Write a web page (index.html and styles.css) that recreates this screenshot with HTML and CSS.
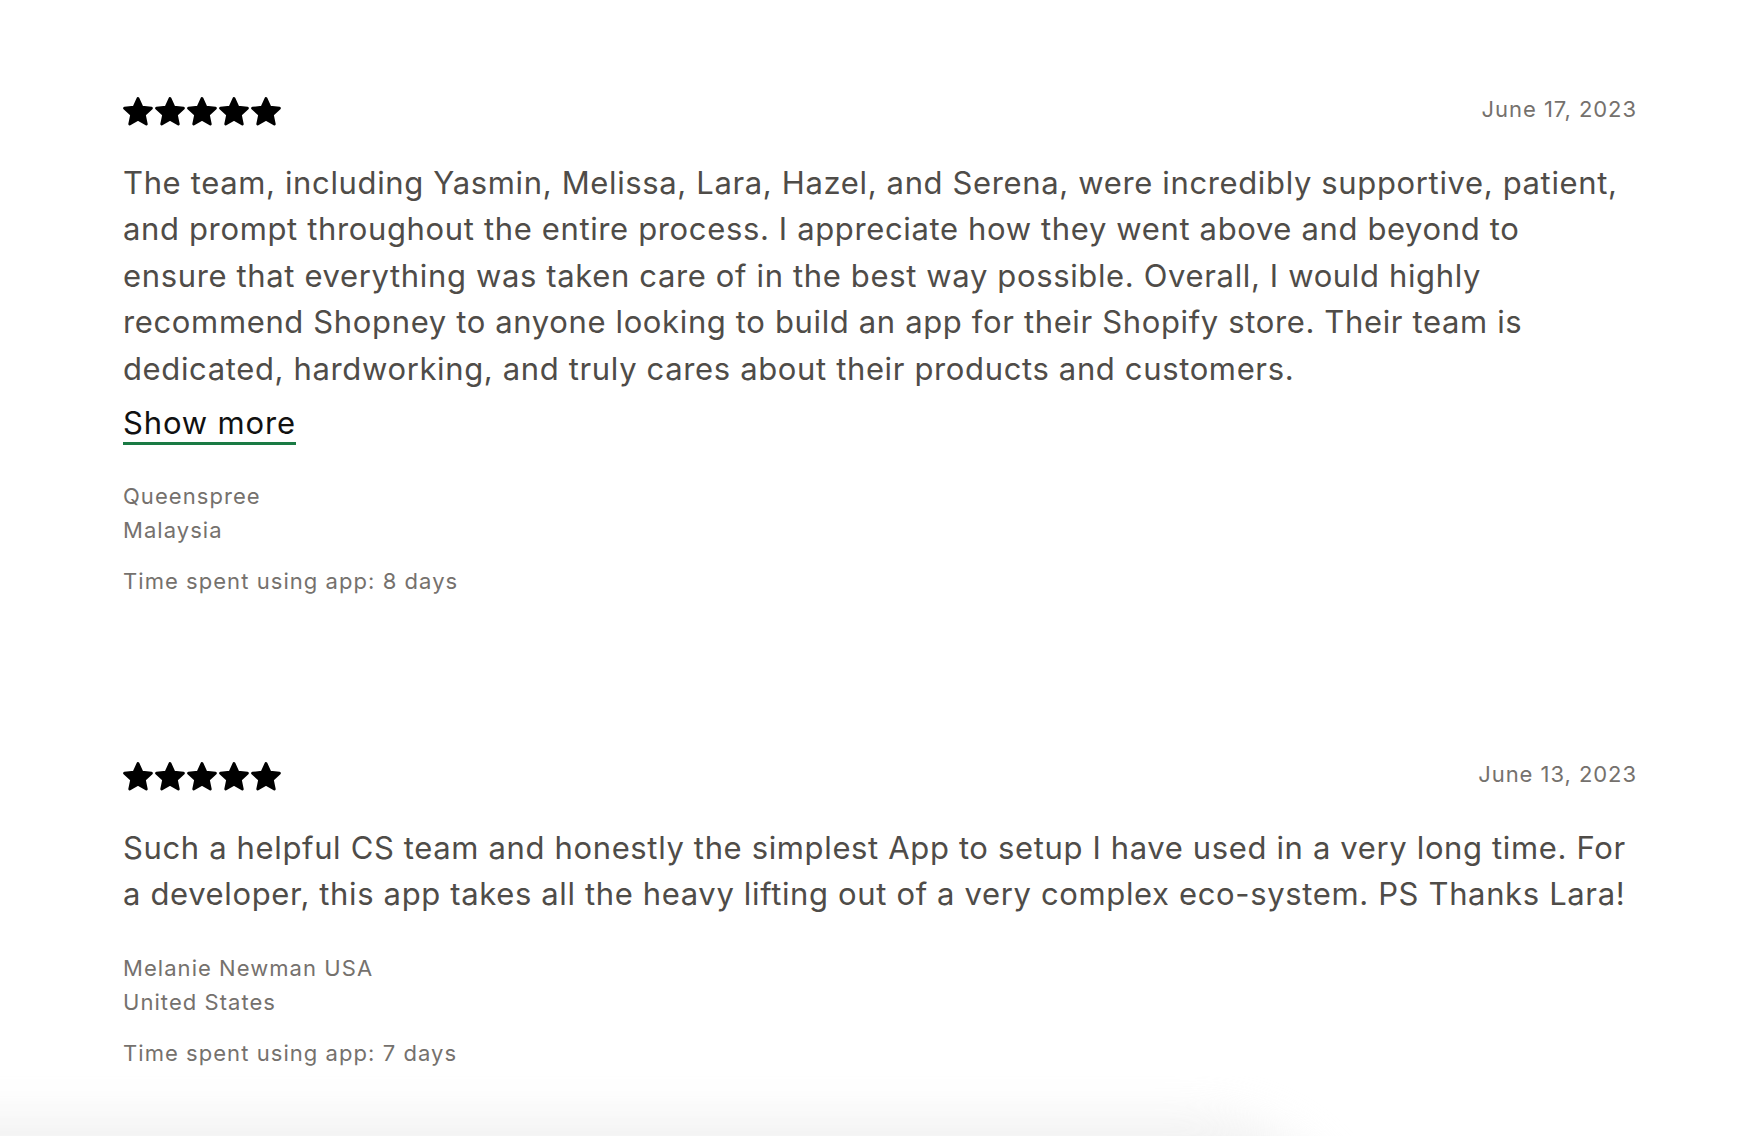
FILE: index.html
```html
<!DOCTYPE html>
<html lang="en">
<head>
<meta charset="utf-8">
<title>Reviews</title>
<link rel="stylesheet" href="styles.css">
</head>
<body>
<svg width="0" height="0" class="defs" aria-hidden="true">
  <defs>
    <symbol id="star" viewBox="0.9 1.1 22.2 21.4">
      <polygon points="12,2.1 14.94,8.555 21.99,9.355 16.755,14.145 18.17,21.09 12,17.6 5.83,21.09 7.245,14.145 2.01,9.355 9.06,8.555" fill="#000" stroke="#000" stroke-width="2" stroke-linejoin="round"/>
    </symbol>
  </defs>
</svg>
<main class="reviews">
  <article class="review">
    <div class="review-head">
      <div class="stars" aria-label="5 out of 5 stars">
        <svg class="star"><use href="#star"/></svg>
        <svg class="star"><use href="#star"/></svg>
        <svg class="star"><use href="#star"/></svg>
        <svg class="star"><use href="#star"/></svg>
        <svg class="star"><use href="#star"/></svg>
      </div>
      <div class="date">June 17, 2023</div>
    </div>
    <p class="review-body">The team, including Yasmin, Melissa, Lara, Hazel, and Serena, were incredibly supportive, patient, and prompt throughout the entire process. I appreciate how they went above and beyond to ensure that everything was taken care of in the best way possible. Overall, I would highly recommend Shopney to anyone looking to build an app for their Shopify store. Their team is dedicated, hardworking, and truly cares about their products and customers.</p>
    <div class="show-more-row"><a class="show-more" href="#">Show more</a></div>
    <div class="meta">
      <div>Queenspree</div>
      <div>Malaysia</div>
    </div>
    <div class="usage">Time spent using app: 8 days</div>
  </article>

  <article class="review">
    <div class="review-head">
      <div class="stars" aria-label="5 out of 5 stars">
        <svg class="star"><use href="#star"/></svg>
        <svg class="star"><use href="#star"/></svg>
        <svg class="star"><use href="#star"/></svg>
        <svg class="star"><use href="#star"/></svg>
        <svg class="star"><use href="#star"/></svg>
      </div>
      <div class="date">June 13, 2023</div>
    </div>
    <p class="review-body">Such a helpful CS team and honestly the simplest App to setup I have used in a very long time. For a developer, this app takes all the heavy lifting out of a very complex eco-system. PS Thanks Lara!</p>
    <div class="meta">
      <div>Melanie Newman USA</div>
      <div>United States</div>
    </div>
    <div class="usage">Time spent using app: 7 days</div>
  </article>
</main>
<div class="shade-wrap" aria-hidden="true"><div class="shade"></div></div>
</body>
</html>
```

FILE: styles.css
```css
html, body {
  margin: 0;
  padding: 0;
  background: #ffffff;
}

body {
  font-family: Inter, "Noto Sans", "Liberation Sans", sans-serif;
}

.defs {
  position: absolute;
  width: 0;
  height: 0;
}

.reviews {
  width: 1514px;
  padding: 94px 0 0 123px;
  display: flex;
  flex-direction: column;
  gap: 161.5px;
}

.review-head {
  display: flex;
  justify-content: space-between;
  align-items: flex-start;
}

.stars {
  display: flex;
  gap: 2px;
  margin-top: 3px;
}

.star {
  width: 30px;
  height: 29px;
  display: block;
}

.date {
  font-size: 22px;
  line-height: 31px;
  letter-spacing: 0.95px;
  color: #75716d;
}

.review-body {
  max-width: 1504px;
  margin: 33.5px 0 0;
  font-size: 31px;
  line-height: 46.5px;
  letter-spacing: 0.64px;
  color: #4f4c48;
}

.show-more-row {
  margin-top: 14.5px;
  line-height: 31px;
}

.show-more {
  display: inline-block;
  font-size: 31px;
  line-height: 31px;
  letter-spacing: 0.85px;
  color: #111111;
  text-decoration: none;
  padding-bottom: 4.5px;
  border-bottom: 3px solid #1a7a44;
}

.meta {
  margin-top: 33.5px;
  font-size: 22px;
  line-height: 34px;
  letter-spacing: 1.05px;
  color: #75716d;
}

.usage {
  margin-top: 17px;
  font-size: 22px;
  line-height: 34px;
  letter-spacing: 1.05px;
  color: #75716d;
}

.shade-wrap {
  position: fixed;
  left: 0;
  right: 0;
  bottom: 0;
  height: 60px;
  overflow: hidden;
  pointer-events: none;
}

.shade {
  position: absolute;
  left: -200px;
  top: 40px;
  width: 1560px;
  height: 200px;
  background: #ededed;
  border-radius: 0 160px 0 0;
  filter: blur(22px);
  opacity: 0.75;
}
```
